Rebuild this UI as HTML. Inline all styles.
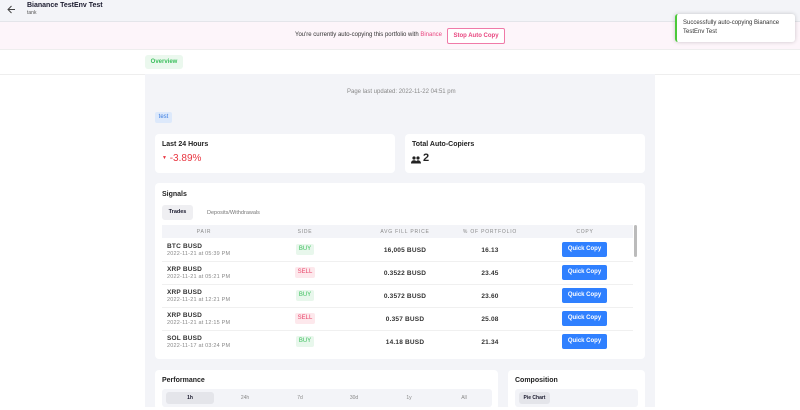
<!DOCTYPE html><html><head><style>
*{box-sizing:border-box;margin:0;padding:0}
body{width:800px;height:407px;overflow:hidden;font-family:"Liberation Sans",sans-serif;background:#fff;position:relative;color:#1a1a2e}
.a{position:absolute}
.hdr{left:0;top:0;width:800px;height:22px;background:#f3f4f8;border-bottom:1px solid #e4e5ea}
.ban{left:0;top:22px;width:800px;height:28px;background:#fdf5fa;border-bottom:1px solid #eee}
.main{left:145px;top:74px;width:510px;height:333px;background:#f3f4f8}
.card{background:#fff;border-radius:4px}
.t{font-size:7px;font-weight:bold;color:#222}
.th{font-size:5px;color:#888;letter-spacing:.8px;text-align:center;top:229px}
.pair{font-size:6.5px;font-weight:bold;color:#333;letter-spacing:.2px}
.dt{font-size:5.5px;color:#888;letter-spacing:.2px}
.qc{width:45px;height:15px;background:#2f80ff;color:#fff;font-size:6px;font-weight:bold;border-radius:2px;text-align:center;line-height:15px;left:562px}
.buy,.sell{font-size:6px;width:18px;height:11px;line-height:11px;text-align:center;border-radius:2px}
.buy{background:#e8f7ec;color:#3bbf5c;left:296px}
.sell{background:#fde8ec;color:#e8456a;left:295px;width:20px}
.num{font-size:6.5px;font-weight:bold;color:#333;text-align:center;letter-spacing:.2px}
</style></head><body>
<div class="a hdr"></div>
<svg class="a" style="left:7px;top:5px" width="9" height="9" viewBox="0 0 9 9"><path d="M8 4.5H1M4.5 1L1 4.5L4.5 8" stroke="#444" fill="none" stroke-width="1"/></svg>
<div class="a" style="left:27px;top:2px;font-size:7px;font-weight:bold">Bianance TestEnv Test</div>
<div class="a" style="left:27px;top:10px;font-size:5px;color:#555">tank</div>
<div class="a ban"></div>
<div class="a" style="left:295px;top:32px;font-size:6px;color:#333">You're currently auto-copying this portfolio with <span style="color:#e8457f">Binance</span></div>
<div class="a" style="left:447px;top:28px;width:58px;height:16px;border:1px solid #f07aa8;border-radius:2px;background:#fff;color:#e8457f;font-size:6px;font-weight:bold;text-align:center;line-height:14px">Stop Auto Copy</div>
<div class="a" style="left:675px;top:14px;width:120px;height:28px;background:#fff;border-radius:3px;box-shadow:0 0 4px rgba(0,0,0,.2);border-left:2px solid #4cc93a;font-size:6px;color:#333;padding:5px 6px;line-height:9px">Successfully auto-copying Bianance TestEnv Test</div>
<div class="a" style="left:145px;top:55px;width:38px;height:14px;background:#ebf8ee;border-radius:3px;color:#3bbf5c;font-size:6px;font-weight:bold;text-align:center;line-height:14px">Overview</div>
<div class="a" style="left:0;top:74px;width:800px;height:1px;background:#eee"></div>
<div class="a main"></div>
<div class="a" style="left:347px;top:89px;font-size:6px;color:#888">Page last updated: 2022-11-22 04:51 pm</div>
<div class="a" style="left:155px;top:112px;width:17px;height:11px;background:#dde9fb;border-radius:2px;color:#3a7ce0;font-size:6px;text-align:center;line-height:11px">test</div>
<div class="a card" style="left:155px;top:134px;width:240px;height:39px"></div>
<div class="a t" style="left:162px;top:141px">Last 24 Hours</div>
<div class="a" style="left:162px;top:153px;font-size:10px;color:#e8343f"><span style="font-size:5px;vertical-align:2px">▼</span> -3.89%</div>
<div class="a card" style="left:405px;top:134px;width:240px;height:39px"></div>
<div class="a t" style="left:412px;top:141px">Total Auto-Copiers</div>
<svg class="a" style="left:411px;top:156px" width="10" height="8" viewBox="0 0 10 8"><circle cx="3" cy="2" r="1.6" fill="#222"/><circle cx="7" cy="2" r="1.6" fill="#222"/><path d="M0 7.5C0 5 1.5 4.3 3 4.3S6 5 6 7.5ZM4.5 7.5C5 5 6 4.3 7 4.3S10 5 10 7.5Z" fill="#222"/></svg>
<div class="a" style="left:423px;top:152px;font-size:11px;font-weight:bold;color:#222">2</div>
<div class="a card" style="left:155px;top:183px;width:490px;height:176px"></div>
<div class="a t" style="left:162px;top:191px">Signals</div>
<div class="a" style="left:162px;top:205px;width:31px;height:15px;background:#efeff2;border-radius:3px;font-size:5.5px;font-weight:bold;text-align:center;line-height:15px">Trades</div>
<div class="a" style="left:207px;top:210px;font-size:5.5px;color:#777">Deposits/Withdrawals</div>
<div class="a" style="left:162px;top:225px;width:471px;height:13px;background:#f3f4f8"></div>
<div class="a" style="left:634px;top:225px;width:3px;height:32px;background:#bbb;border-radius:2px"></div>
<div class="a th" style="left:188px;width:32px">PAIR</div>
<div class="a th" style="left:290px;width:30px">SIDE</div>
<div class="a th" style="left:365px;width:80px">AVG FILL PRICE</div>
<div class="a th" style="left:460px;width:60px">% OF PORTFOLIO</div>
<div class="a th" style="left:565px;width:40px">COPY</div>

<div class="a pair" style="left:167px;top:243px">BTC BUSD</div><div class="a dt" style="left:167px;top:251px">2022-11-21 at 05:39 PM</div>
<div class="a buy" style="top:244px">BUY</div><div class="a num" style="left:365px;top:247px;width:80px">16,005 BUSD</div><div class="a num" style="left:460px;top:247px;width:60px">16.13</div><div class="a qc" style="top:242px">Quick Copy</div>
<div class="a" style="left:162px;top:261px;width:471px;height:1px;background:#f0f0f0"></div>
<div class="a pair" style="left:167px;top:266px">XRP BUSD</div><div class="a dt" style="left:167px;top:274px">2022-11-21 at 05:21 PM</div>
<div class="a sell" style="top:267px">SELL</div><div class="a num" style="left:365px;top:270px;width:80px">0.3522 BUSD</div><div class="a num" style="left:460px;top:270px;width:60px">23.45</div><div class="a qc" style="top:265px">Quick Copy</div>
<div class="a" style="left:162px;top:284px;width:471px;height:1px;background:#f0f0f0"></div>
<div class="a pair" style="left:167px;top:289px">XRP BUSD</div><div class="a dt" style="left:167px;top:297px">2022-11-21 at 12:21 PM</div>
<div class="a buy" style="top:290px">BUY</div><div class="a num" style="left:365px;top:293px;width:80px">0.3572 BUSD</div><div class="a num" style="left:460px;top:293px;width:60px">23.60</div><div class="a qc" style="top:288px">Quick Copy</div>
<div class="a" style="left:162px;top:307px;width:471px;height:1px;background:#f0f0f0"></div>
<div class="a pair" style="left:167px;top:312px">XRP BUSD</div><div class="a dt" style="left:167px;top:320px">2022-11-21 at 12:15 PM</div>
<div class="a sell" style="top:313px">SELL</div><div class="a num" style="left:365px;top:316px;width:80px">0.357 BUSD</div><div class="a num" style="left:460px;top:316px;width:60px">25.08</div><div class="a qc" style="top:311px">Quick Copy</div>
<div class="a" style="left:162px;top:330px;width:471px;height:1px;background:#f0f0f0"></div>
<div class="a pair" style="left:167px;top:335px">SOL BUSD</div><div class="a dt" style="left:167px;top:343px">2022-11-17 at 03:24 PM</div>
<div class="a buy" style="top:336px">BUY</div><div class="a num" style="left:365px;top:339px;width:80px">14.18 BUSD</div><div class="a num" style="left:460px;top:339px;width:60px">21.34</div><div class="a qc" style="top:334px">Quick Copy</div>

<div class="a card" style="left:155px;top:370px;width:343px;height:40px"></div>
<div class="a t" style="left:162px;top:377px">Performance</div>
<div class="a" style="left:162px;top:389px;width:330px;height:18px;background:#f3f4f8;border-radius:3px"></div>
<div class="a" style="left:166px;top:392px;width:48px;height:12px;background:#e4e5ea;border-radius:3px"></div>
<div class="a" style="left:166px;top:395px;width:48px;text-align:center;font-size:5px;font-weight:bold">1h</div>
<div class="a" style="left:225px;top:395px;width:40px;text-align:center;font-size:5px;color:#888">24h</div>
<div class="a" style="left:280px;top:395px;width:40px;text-align:center;font-size:5px;color:#888">7d</div>
<div class="a" style="left:334px;top:395px;width:40px;text-align:center;font-size:5px;color:#888">30d</div>
<div class="a" style="left:389px;top:395px;width:40px;text-align:center;font-size:5px;color:#888">1y</div>
<div class="a" style="left:444px;top:395px;width:40px;text-align:center;font-size:5px;color:#888">All</div>
<div class="a card" style="left:508px;top:370px;width:137px;height:40px"></div>
<div class="a t" style="left:515px;top:377px">Composition</div>
<div class="a" style="left:515px;top:389px;width:123px;height:18px;background:#f3f4f8;border-radius:3px"></div>
<div class="a" style="left:519px;top:392px;width:31px;height:12px;background:#e4e5ea;border-radius:3px;font-size:5px;font-weight:bold;text-align:center;line-height:12px">Pie Chart</div>
</body></html>
